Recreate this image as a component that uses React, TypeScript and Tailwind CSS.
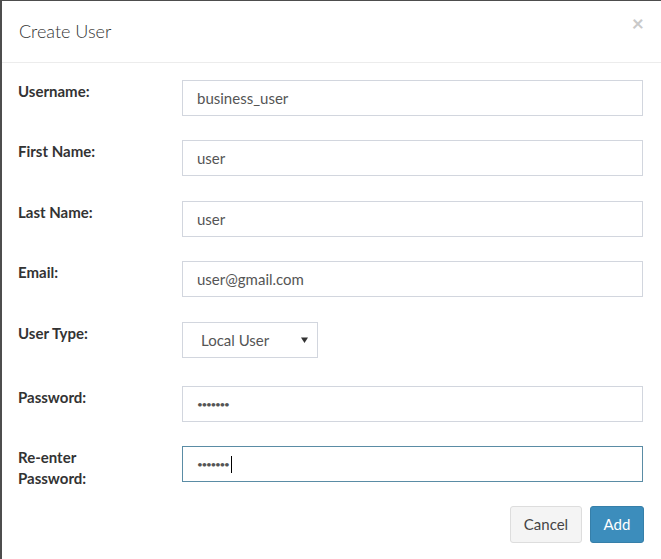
import React from "react";

type Field = {
  label: string;
  value: string;
  kind: "text" | "select" | "password";
  gap: string;
  focused?: boolean;
};

const fields: Field[] = [
  { label: "Username:", value: "business_user", kind: "text", gap: "mt-0" },
  { label: "First Name:", value: "user", kind: "text", gap: "mt-[24px]" },
  { label: "Last Name:", value: "user", kind: "text", gap: "mt-[25px]" },
  { label: "Email:", value: "user@gmail.com", kind: "text", gap: "mt-[24px]" },
  { label: "User Type:", value: "Local User", kind: "select", gap: "mt-[25px]" },
  { label: "Password:", value: "•••••••", kind: "password", gap: "mt-[28px]" },
  { label: "Re-enter Password:", value: "•••••••", kind: "password", gap: "mt-[24px]", focused: true },
];

const FieldControl: React.FC<{ field: Field }> = ({ field }) => {
  if (field.kind === "select") {
    return (
      <div className="flex h-[36px] w-[136px] items-center justify-between border border-[#d2d6de] bg-white pl-[18px] pr-[9px] text-[15px] text-[#555]">
        <span>{field.value}</span>
        <svg width="7" height="6" viewBox="0 0 7 6">
          <path d="M0 0.5h7L3.5 6z" fill="#333" />
        </svg>
      </div>
    );
  }

  if (field.kind === "password") {
    return (
      <div
        className={
          "flex h-[36px] w-[461px] items-center border bg-white px-[14px] text-[#555] " +
          (field.focused ? "border-[#5a8ca5]" : "border-[#d2d6de]")
        }
      >
        <span className="text-[10px] tracking-[-1.3px]">{field.value}</span>
        {field.focused && <span className="ml-[2px] h-[17px] w-px bg-black" />}
      </div>
    );
  }

  return (
    <input
      readOnly
      value={field.value}
      className="h-[36px] w-[461px] border border-[#d2d6de] bg-white px-[14px] text-[15px] text-[#555] outline-none"
    />
  );
};

export default function App() {
  return (
    <div
      className="h-[559px] w-[661px] overflow-hidden border-l-2 border-t border-[#4d4d4d] bg-white"
      style={{ fontFamily: "Lato, 'Liberation Sans', sans-serif" }}
    >
      <div className="flex h-[62px] items-center justify-between border-b border-[#ececec] pl-[17px] pr-[17px]">
        <h4 className="text-[18px] font-light text-[#333]">Create User</h4>
        <button className="-mt-[18px] text-[21px] font-bold leading-none text-[#c9c9c9]">×</button>
      </div>

      <div className="flex flex-col pl-[16px] pt-[17px]">
        {fields.map((field) => (
          <div key={field.label} className={"flex items-start " + field.gap}>
            <label className="w-[164px] shrink-0 pt-[1px] text-[15px] font-bold leading-[21px] text-[#333]">
              <span className="block w-[100px]">{field.label}</span>
            </label>
            <FieldControl field={field} />
          </div>
        ))}
      </div>

      <div className="mt-[17px] flex justify-end gap-[8px] pr-[17px]">
        <button className="h-[37px] w-[72px] rounded-[3px] border border-[#dddddd] bg-[#f4f4f4] text-[15px] text-[#444]">
          Cancel
        </button>
        <button className="h-[37px] w-[54px] rounded-[3px] border border-[#367fa9] bg-[#3c8dbc] text-[15px] text-white">
          Add
        </button>
      </div>
    </div>
  );
}
